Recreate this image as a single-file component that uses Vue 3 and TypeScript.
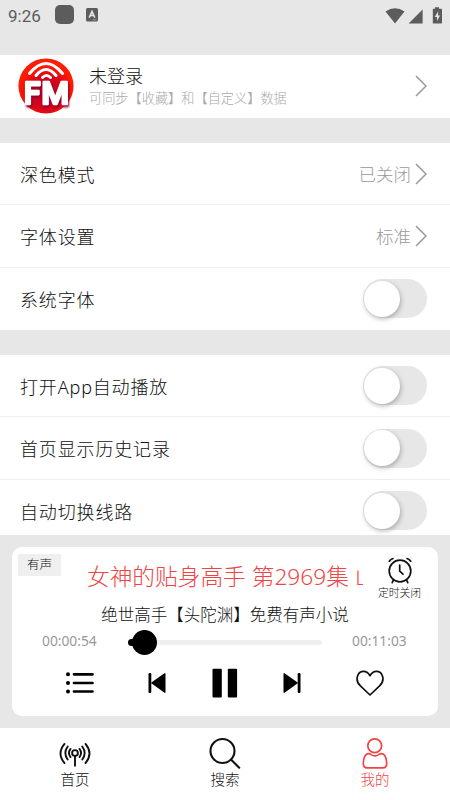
<script setup lang="ts">
import { ref } from 'vue'

interface SettingRow {
  label: string
  value?: string
  enabled?: boolean
}

const groups = ref<SettingRow[][]>([
  [
    { label: '深色模式', value: '已关闭' },
    { label: '字体设置', value: '标准' },
    { label: '系统字体', enabled: false },
  ],
  [
    { label: '打开App自动播放', enabled: false },
    { label: '首页显示历史记录', enabled: false },
    { label: '自动切换线路', enabled: false },
  ],
])

function flip(row: SettingRow) {
  row.enabled = !row.enabled
}
</script>

<template>
  <div class="screen">
    <header class="status">
      <span class="clock">9:26</span>
      <span class="notice"></span>
      <svg class="lang" width="12" height="14" viewBox="0 0 12 14">
        <rect width="12" height="13.5" rx="1.5" fill="#5c5c5c" />
        <path d="M3.2 9.6 6 3.4l2.8 6.2M4.2 7.6h3.6" fill="none" stroke="#e8e8e8" stroke-width="1.5" />
        <path d="M6.5 11.8h4" stroke="#aaa" stroke-width=".8" />
      </svg>
      <svg class="signals" width="60" height="18" viewBox="0 0 60 18">
        <path d="M.5 4.600Q10-2 19.500 4.600L10 16.500Z" fill="#5c5c5c" />
        <path d="M23.600 16.500 37.600 2.500V16.500Z" fill="#5c5c5c" />
        <path d="M50 .3h4v1.500h2.200q.8 0 .8.8v13.100q0 .8-.8.800h-7.600q-.8 0-.8-.8V2.600q0-.8.8-.8H50Z" fill="#5c5c5c" />
        <path d="M53.200 4.200 49.800 9.900h2.200v4.200l3-5.600h-2Z" fill="#e8e8e8" />
      </svg>
    </header>

    <main class="content">
      <section class="profile">
        <svg class="avatar" width="56" height="56" viewBox="0 0 56 56">
          <defs>
            <radialGradient id="disc" cx="50%" cy="62%" r="50%">
              <stop offset="0" stop-color="#a90028" />
              <stop offset=".62" stop-color="#d9051d" />
              <stop offset=".85" stop-color="#f51207" />
              <stop offset="1" stop-color="#ff1b04" />
            </radialGradient>
          </defs>
          <circle cx="28" cy="28" r="27.600" fill="url(#disc)" />
          <g fill="none" stroke="#fff" stroke-linecap="round" stroke-width="3">
            <path d="M11.500 15.500Q28-4.500 44.500 15.500" />
            <path d="M18 17.500Q28 5.500 38 17.500" />
            <path d="M24.500 19.500Q28.500 15.500 32.500 19.500" />
          </g>
          <g class="logo-letters">
            <text x="6" y="46" textLength="16.500" lengthAdjust="spacingAndGlyphs">F</text>
            <text x="23.500" y="46" textLength="27.500" lengthAdjust="spacingAndGlyphs">M</text>
          </g>
        </svg>
        <div class="identity">
          <div class="name">未登录</div>
          <div class="hint">可同步【收藏】和【自定义】数据</div>
        </div>
        <svg class="chevron" width="12" height="22" viewBox="0 0 12 22"><path d="m1 1 10 10L1 21" /></svg>
      </section>

      <section v-for="(group, index) in groups" :key="index" class="group">
        <div v-for="row in group" :key="row.label" class="row">
          <span class="label">{{ row.label }}</span>
          <template v-if="row.value">
            <span class="value">{{ row.value }}</span>
            <svg class="chevron" width="12" height="22" viewBox="0 0 12 22"><path d="m1 1 10 10L1 21" /></svg>
          </template>
          <button v-else class="toggle" :class="{ on: row.enabled }" :aria-pressed="row.enabled" @click="flip(row)">
            <span class="knob"></span>
          </button>
        </div>
      </section>
    </main>

    <section class="dock">
      <div class="player">
        <div class="top">
          <span class="tag">有声</span>
          <div class="marquee"><span>女神的贴身高手 第2969集 山</span></div>
          <div class="timer">
            <svg width="26" height="27" viewBox="0 0 26 27" fill="none" stroke="#111" stroke-width="1.700" stroke-linecap="round">
              <circle cx="13" cy="14" r="10.800" />
              <path d="M12.700 8v6.200l3.300 3M2.300 4.200Q3.500 2.200 6 1.500M20 1.500q2.500.7 3.700 2.700M6.300 23.300 5.200 25.700M19.700 23.300l1.100 2.400" />
            </svg>
            <span class="timer-label">定时关闭</span>
          </div>
        </div>
        <div class="subtitle">绝世高手【头陀渊】免费有声小说</div>
        <div class="progress">
          <span class="time">00:00:54</span>
          <div class="track"><span class="played"></span><span class="thumb"></span></div>
          <span class="time">00:11:03</span>
        </div>
        <div class="controls">
          <svg width="28" height="22" viewBox="0 0 28 22" stroke="#000" stroke-width="2.700" stroke-linecap="round">
            <path d="M8 2.300h18.500M8 11h18.500M8 19.500h18.500" />
            <g stroke="none"><circle cx="2" cy="2.300" r="2" /><circle cx="2" cy="11" r="2" /><circle cx="2" cy="19.500" r="2" /></g>
          </svg>
          <svg width="18" height="20" viewBox="0 0 18 20">
            <rect x=".5" width="2.800" height="20" rx="1.200" />
            <path d="M3.300 10.200v-.8L16.500.2q1-.4 1 .8v18q0 1.200-1 .8Z" />
          </svg>
          <svg width="26" height="30" viewBox="0 0 26 30"><rect x=".5" y=".8" width="9.300" height="28.700" rx="1" /><rect x="15.800" y=".8" width="9.300" height="28.700" rx="1" /></svg>
          <svg width="18" height="20" viewBox="0 0 18 20">
            <rect x="14.700" width="2.800" height="20" rx="1.200" />
            <path d="M14.700 10.200v-.8L1.500.2q-1-.4-1 .8v18q0 1.200 1 .8Z" />
          </svg>
          <svg width="28" height="26" viewBox="0 0 28 26" fill="none" stroke="#111" stroke-width="1.700" stroke-linejoin="round"><path d="M14 5.700C10.800.2 4.300.1 1.900 5.100.1 9.100 1.200 12.700 4.400 15.900L14 25l9.600-9.100c3.200-3.200 4.300-6.800 2.500-10.800C23.700.1 17.200.2 14 5.700Z" /></svg>
        </div>
      </div>
    </section>

    <nav class="tabs">
      <a class="tab">
        <svg width="32" height="32" viewBox="0 0 32 32" fill="none" stroke="#111" stroke-width="1.900" stroke-linecap="round">
          <circle cx="16" cy="16" r="2.900" /><path d="M16 19v9.800" />
          <path d="M11.500 11.900q-3.100 4.100 0 8.200M20.500 11.900q3.100 4.100 0 8.200M8.700 9.500q-4.700 6.500 0 13M23.300 9.500q4.700 6.500 0 13M5.500 6.900q-8 9.600 0 19.200M26.500 6.900q8 9.600 0 19.200" />
        </svg>
        <span>首页</span>
      </a>
      <a class="tab">
        <svg width="32" height="32" viewBox="0 0 32 32" fill="none" stroke="#111" stroke-width="2.100" stroke-linecap="round">
          <circle cx="13.500" cy="14" r="12" /><path d="m22.200 22.700 8 8" />
        </svg>
        <span>搜索</span>
      </a>
      <a class="tab active">
        <svg width="32" height="32" viewBox="0 0 32 32" fill="none" stroke="#f04444" stroke-width="1.700" stroke-linejoin="round">
          <circle cx="15.700" cy="8.800" r="6.900" />
          <path d="M10 16.700C6 16.500 4.300 21.500 4.300 26.500q0 4.400 4 4.400h15.400q4 0 4-4.400C27.700 21.500 26 16.500 22 16.700c-1.800.2-3.100 2.200-6 2.200s-4.200-2-6-2.200Z" />
        </svg>
        <span>我的</span>
      </a>
    </nav>
  </div>
</template>

<style>
body { margin: 0; overflow: hidden; }
</style>

<style scoped>
* { box-sizing: border-box; }
.screen {
  display: flex; flex-direction: column; width: 450px; height: 800px; overflow: hidden;
  background: #e7e7e7; color: #111; font-family: 'Noto Sans', 'Noto Sans CJK SC', sans-serif; font-weight: 300;
}
svg { flex: none; display: block; }
.status { flex: none; display: flex; height: 55px; padding: 6px 8px 0; align-items: flex-start; }
.clock { width: 47px; color: #5c5c5c; font: 400 17px/20px Roboto, sans-serif; }
.notice { width: 19px; height: 19px; margin-top: -1px; border-radius: 5px; background: #5c5c5c; }
.lang { margin: 2px 0 0 12px; }
.signals { margin-top: 1px; margin-left: auto; margin-right: -3px; }
.content { display: flex; flex-direction: column; gap: 25.200px; height: 480px; flex: none; overflow: hidden; }
.profile { flex: none; display: flex; align-items: center; height: 62.800px; padding: 0 23px 0 18px; background: #fff; }
.logo-letters { fill: #fff; stroke: #fff; stroke-width: 2.600px; stroke-linejoin: round; font: 500 32px Roboto, sans-serif; filter: drop-shadow(1px 2px 1px #8b0028); }
.identity { display: flex; flex-direction: column; flex: 1; margin-left: 15px; }
.name { font-size: 18px; line-height: 24px; }
.hint { color: #aaa; font-size: 13.200px; line-height: 21px; white-space: nowrap; }
.chevron { fill: none; stroke: #999; stroke-width: 1.500px; }
.group { flex: none; background: #fff; }
.row { display: flex; align-items: center; height: 62.300px; padding: 0 23px 0 20px; border-bottom: 1.500px solid #eee; }
.row:last-child { border-bottom: 0; }
.label { flex: 1; font-size: 18px; letter-spacing: .85px; white-space: nowrap; }
.value { margin-right: 4px; color: #999; font-size: 17.500px; }
.toggle { width: 64px; height: 39px; padding: 1px; border: 0; border-radius: 20px; background: #e7e7e7; margin-right: .5px; }
.knob { display: block; width: 36px; height: 36px; border-radius: 50%; background: #fff; box-shadow: 1px 2px 5px #0004; }
.toggle.on { background: #f04444; }
.toggle.on .knob { margin-left: auto; }
.dock { flex: none; height: 193px; padding: 12px 12px 0; }
.player { display: flex; flex-direction: column; height: 169px; border-radius: 10px; background: #fff; }
.top { display: grid; grid-template-columns: 75px 276px 75px; height: 54px; }
.tag { width: 43px; height: 22px; margin: 7px 0 0 6px; background: #efefef; font-size: 12.500px; line-height: 22px; text-align: center; }
.marquee { overflow: hidden; color: #f04444; font-size: 22.700px; line-height: 59px; height: 54px; white-space: nowrap; }
.timer { display: flex; flex-direction: column; align-items: center; padding: 10px 2px 0 0; }
.timer-label { font-size: 10.800px; line-height: 18px; }
.subtitle { padding-top: 1px; font-size: 16.500px; line-height: 25px; text-align: center; }
.progress { display: grid; grid-template-columns: 116px 194px 116px; align-items: center; height: 26px; }
.time { padding-left: 30px; color: #999; font-size: 13.800px; font-weight: 400; }
.track { position: relative; height: 5px; margin-top: 4px; border-radius: 3px; background: #efefef; }
.played { position: absolute; left: 0; top: -1px; width: 16px; height: 7px; border-radius: 4px; background: #000; }
.thumb { position: absolute; left: 4px; top: -10px; width: 25px; height: 25px; border-radius: 50%; background: #000; }
.controls { display: grid; grid-template-columns: 78px 76px 60px 75px 80px; justify-content: center; justify-items: center; align-items: center; height: 60px; }
.tabs { flex: none; display: grid; grid-template-columns: repeat(3, 1fr); height: 72px; background: #fff; }
.tab { display: flex; flex-direction: column; align-items: center; padding-top: 9px; font-size: 14.500px; line-height: 20px; }
.active { color: #f04444; }
</style>
